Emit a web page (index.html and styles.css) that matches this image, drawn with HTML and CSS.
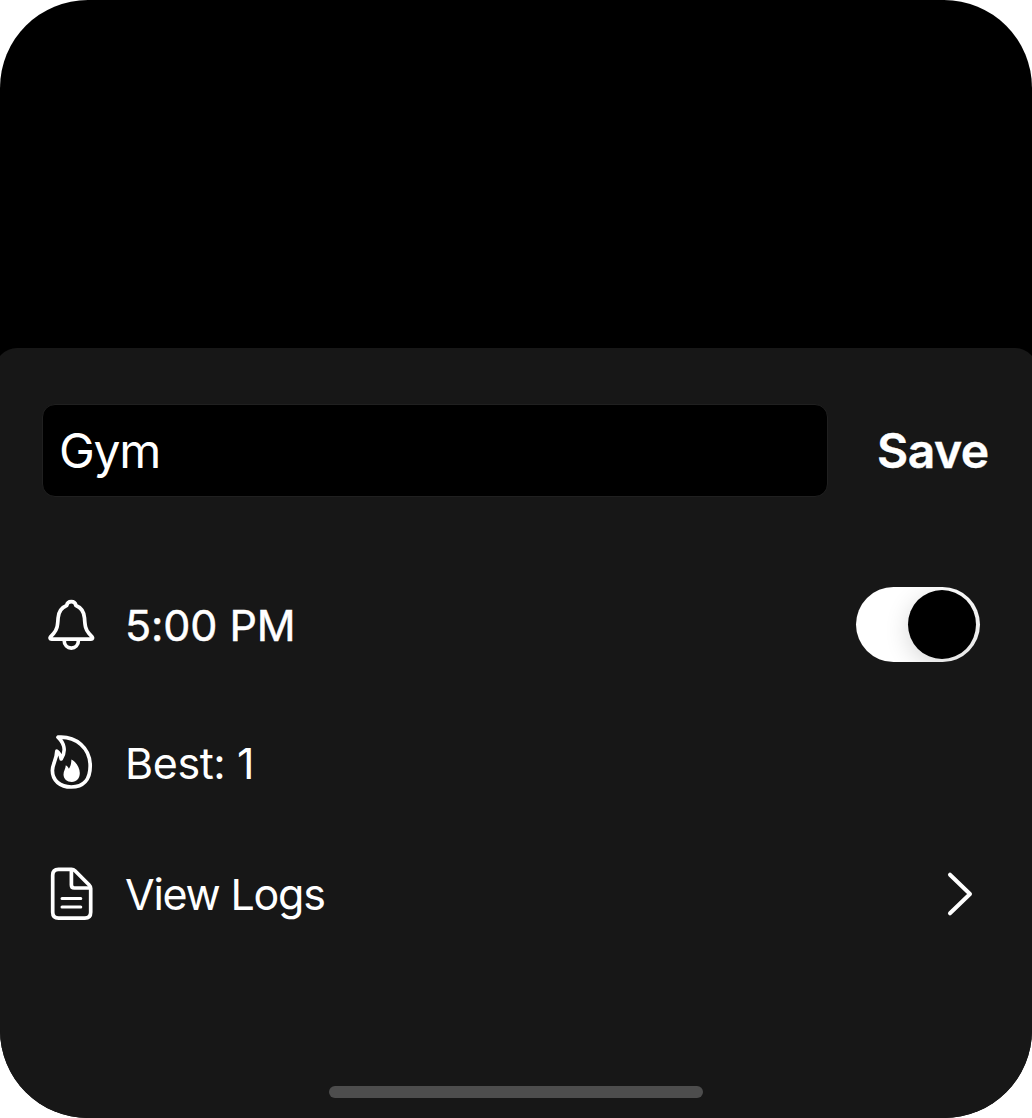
FILE: index.html
```html
<!DOCTYPE html>
<html lang="en">
<head>
<meta charset="utf-8">
<title>Gym</title>
<link rel="stylesheet" href="styles.css">
</head>
<body>
<main class="screen">
  <section class="sheet">
    <header class="header">
      <div class="name-field">Gym</div>
      <div class="save">Save</div>
    </header>
    <div class="row row-time">
      <svg class="icon" viewBox="0 0 60 70">
        <path d="M24.7 15.5C25.5 10.2 33.1 10.2 33.9 15.5C39.2 17.5 42 22 42.5 28C43 36 43.5 39.5 47 43.5L50 46.8C51 48 50.7 49.2 49 49.2H9.6C7.9 49.2 7.6 48 8.6 46.8L11.6 43.5C15.1 39.5 15.6 36 16.1 28C16.6 22 19.4 17.5 24.7 15.5Z"/>
        <path d="M22.1 49.8C22.1 60.8 36.5 60.8 36.5 49.8"/>
      </svg>
      <span class="label time">5:00 PM</span>
      <div class="toggle"><div class="knob"></div></div>
    </div>
    <div class="row row-best">
      <svg class="icon" viewBox="0 0 60 70">
        <path d="M16 9.2C34 7.8 48.2 20 48.2 38C48.2 52 41 59 29.3 59C18 59 10.4 52.5 10.4 42.5C10.4 36 14.5 32.5 14.8 23.2C17.4 25.3 18.7 27.5 19.2 31C24.8 22.5 21.5 14.5 16 9.2Z"/>
        <path class="solid" d="M29.4 31.5C33.5 33.5 37.8 39.2 37.8 45C37.8 50.5 34.5 54 29.8 54C25 54 21.5 51 21.5 46.5C21.5 43 23.6 41 23.8 37.3C25.3 38.3 26.3 39.4 26.9 40.8C28.5 38.5 29.3 35.5 29.4 31.5Z"/>
      </svg>
      <span class="label best">Best: 1</span>
    </div>
    <div class="row row-logs">
      <svg class="icon" viewBox="0 0 60 70">
        <path d="M16.5 10.3H29.5Q31.5 10.3 33 11.8L47.2 26Q48.7 27.5 48.7 29.5V53.3Q48.7 59.2 42.8 59.2H16.6Q10.7 59.2 10.7 53.3V16.2Q10.7 10.3 16.5 10.3Z"/>
        <path d="M29.4 11V26Q29.4 29 32.4 29H48"/>
        <path d="M20 39.4H38.8M20 48.1H38.8" stroke-width="3"/>
      </svg>
      <span class="label logs">View Logs</span>
      <svg class="chevron" viewBox="0 0 32 50"><path d="M6 5.7L26 25L6 44.3"/></svg>
    </div>
    <div class="home-bar"></div>
  </section>
</main>
</body>
</html>
```
FILE: styles.css
```css
* { box-sizing: border-box; }
body {
  margin: 0;
  background: #fff;
  color: #fff;
  font-family: Inter, "Liberation Sans", sans-serif;
}
.screen {
  display: flex;
  flex-direction: column;
  justify-content: flex-end;
  width: 1032px;
  height: 1118px;
  border-radius: 88px;
  background: #000;
  overflow: hidden;
}
.sheet {
  display: flex;
  flex-direction: column;
  height: 770px;
  margin: 0 -5px;
  padding: 56px 47px 20px;
  border-radius: 22px 22px 0 0;
  background: #171717;
}
.header {
  display: flex;
  align-items: center;
  gap: 49px;
}
.name-field {
  flex: none;
  width: 786px;
  height: 93px;
  padding-left: 16px;
  border: 1px solid #202020;
  border-radius: 13px;
  background: #000;
  font-size: 48px;
  letter-spacing: -1.3px;
  line-height: 91px;
}
.save {
  font-size: 48px;
  line-height: 93px;
  font-weight: 600;
  letter-spacing: -0.5px;
  white-space: nowrap;
  -webkit-text-stroke: 0.4px #fff;
}
.row {
  display: flex;
  align-items: center;
  height: 76px;
}
.row-time { margin-top: 90px; }
.row-best { margin-top: 62px; }
.row-logs { margin-top: 55px; }
.icon {
  width: 60px;
  height: 70px;
  margin-right: 23px;
}
.icon, .chevron {
  flex: none;
  fill: none;
  stroke: #fff;
  stroke-width: 3.7;
  stroke-linecap: round;
  stroke-linejoin: round;
}
.icon .solid { fill: #fff; stroke: none; }
.label {
  font-size: 43px;
  line-height: 60px;
  white-space: nowrap;
}
.time {
  letter-spacing: -0.1px;
  -webkit-text-stroke: 0.5px #fff;
}
.best { letter-spacing: -0.4px; }
.logs { letter-spacing: -1.25px; }
.toggle {
  display: flex;
  justify-content: flex-end;
  align-items: center;
  align-self: flex-start;
  width: 124px;
  height: 75px;
  margin-left: auto;
  margin-right: 10px;
  padding-right: 4px;
  border-radius: 38px;
  background: #fff;
  overflow: hidden;
}
.knob {
  width: 68px;
  height: 69px;
  border-radius: 50%;
  background: #000;
  box-shadow: 0 6px 24px rgba(0, 0, 0, 0.16);
}
.chevron {
  width: 32px;
  height: 50px;
  margin-left: auto;
  margin-right: 14px;
  stroke-width: 4;
}
.home-bar {
  align-self: center;
  width: 374px;
  height: 12px;
  margin-top: auto;
  border-radius: 6px;
  background: #4d4d4d;
}
```
